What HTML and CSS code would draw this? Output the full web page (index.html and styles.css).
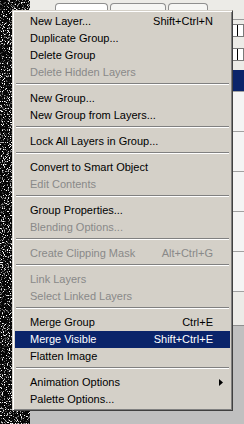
FILE: index.html
```html
<!DOCTYPE html>
<html lang="en">
<head>
    <meta charset="UTF-8">
    <title>Layers palette menu</title>
    <link rel="stylesheet" href="styles.css">
</head>
<body>
    <div class="screen">
        <div class="photo">
            <svg width="30" height="424" viewBox="0 0 30 424">
                <filter id="grain">
                    <feTurbulence type="fractalNoise" baseFrequency="0.85" numOctaves="2" seed="7"/>
                    <feColorMatrix type="matrix" values="0 0 0 0 1  0 0 0 0 1  0 0 0 0 1  7 0 0 0 -3.9"/>
                </filter>
                <rect width="30" height="424" fill="#060606"/>
                <rect width="30" height="424" filter="url(#grain)"/>
            </svg>
        </div>

        <div class="workspace">
            <div class="palette">
                <div class="tabs">
                    <span class="tab active"></span>
                    <span class="tab"></span>
                    <span class="tab"></span>
                </div>
                <div class="palette-body">
                    <div class="opt-row"><span class="field"><span class="field-btn"></span></span></div>
                    <div class="opt-row"><span class="field"><span class="field-btn"></span></span></div>
                    <div class="layer-list">
                        <div class="layer selected"></div>
                        <div class="layer"></div>
                        <div class="layer"></div>
                        <div class="layer"></div>
                        <div class="layer"></div>
                        <div class="layer"></div>
                    </div>
                </div>
            </div>
        </div>

        <ul class="menu">
            <li class="item"><span>New Layer...</span><span class="key">Shift+Ctrl+N</span></li>
            <li class="item"><span>Duplicate Group...</span></li>
            <li class="item"><span>Delete Group</span></li>
            <li class="item off"><span>Delete Hidden Layers</span></li>
            <li class="sep"></li>
            <li class="item"><span>New Group...</span></li>
            <li class="item"><span>New Group from Layers...</span></li>
            <li class="sep"></li>
            <li class="item"><span>Lock All Layers in Group...</span></li>
            <li class="sep"></li>
            <li class="item"><span>Convert to Smart Object</span></li>
            <li class="item off"><span>Edit Contents</span></li>
            <li class="sep"></li>
            <li class="item"><span>Group Properties...</span></li>
            <li class="item off"><span>Blending Options...</span></li>
            <li class="sep"></li>
            <li class="item off"><span>Create Clipping Mask</span><span class="key">Alt+Ctrl+G</span></li>
            <li class="sep"></li>
            <li class="item off"><span>Link Layers</span></li>
            <li class="item off"><span>Select Linked Layers</span></li>
            <li class="sep"></li>
            <li class="item"><span>Merge Group</span><span class="key">Ctrl+E</span></li>
            <li class="item hot"><span>Merge Visible</span><span class="key">Shift+Ctrl+E</span></li>
            <li class="item"><span>Flatten Image</span></li>
            <li class="sep"></li>
            <li class="item sub"><span>Animation Options</span>
                <svg class="arrow" width="4" height="7" viewBox="0 0 4 7"><polygon points="0,0 4,3.5 0,7" fill="#000"/></svg>
            </li>
            <li class="item"><span>Palette Options...</span></li>
        </ul>
    </div>
</body>
</html>
```

FILE: styles.css
```css
* {
    margin: 0;
    padding: 0;
    box-sizing: border-box;
}

body {
    font-family: "Liberation Sans", Arial, sans-serif;
    font-size: 11px;
    background: #c0c0c0;
}

.screen {
    position: relative;
    width: 244px;
    height: 424px;
    display: flex;
    overflow: hidden;
}

.photo {
    width: 30px;
    flex: none;
    background: #060606;
}

.photo svg {
    display: block;
}

.workspace {
    flex: 1;
    background: #c0c0c0;
}

/* layers palette behind the menu */
.palette {
    background: #ecebe7;
    height: 326px;
    border-bottom: 1px solid #8e8e8e;
}

.tabs {
    display: flex;
    gap: 2px;
    padding: 3px 0 0 25px;
    height: 20px;
    border-bottom: 1px solid #9a9a9a;
}

.tab {
    width: 53px;
    border: 1px solid #8f8f8f;
    border-bottom: none;
    border-radius: 4px 4px 0 0;
    background: #f6f6f4;
}

.tab:nth-child(2) {
    width: 56px;
}

.tab:nth-child(3) {
    width: 40px;
}

.tab.active {
    background: #fff;
}

.palette-body {
    padding-top: 2px;
}

.opt-row {
    display: flex;
    justify-content: flex-end;
    height: 24px;
    padding: 2px 0;
}

.field {
    display: flex;
    justify-content: flex-end;
    width: 20px;
    height: 13px;
    background: #fff;
    border: 1px solid #7a7a7a;
    border-left-color: #000;
}

.field-btn {
    width: 6px;
    border-left: 1px solid #000;
}

.layer-list {
    background: #fff;
}

.layer {
    height: 40px;
    border-bottom: 1px solid #a0a0a0;
    background: #f4f4f4;
}

.layer.selected {
    height: 22px;
    background: #0a246a;
}

/* context menu */
.menu {
    position: absolute;
    left: 12px;
    top: 10px;
    width: 221px;
    list-style: none;
    background: #d4d0c8;
    border: 1px solid;
    border-color: #d4d0c8 #404040 #404040 #d4d0c8;
    box-shadow: inset 1px 1px #fff, inset -1px -1px #808080;
    padding: 2px;
    font-family: "Liberation Sans", Arial, sans-serif;
    font-size: 11px;
    color: #000;
}

.item {
    display: flex;
    align-items: center;
    height: 17px;
    line-height: 17px;
    padding: 0 17px 0 15px;
    white-space: nowrap;
}

.item .key {
    margin-left: auto;
}

.item.off {
    color: #898989;
}

.item.hot {
    background: #0a246a;
    color: #fff;
}

.item.sub {
    padding-right: 7px;
}

.item .arrow {
    margin-left: auto;
    display: block;
}

.sep {
    margin: 2px 1px 5px;
    border-top: 1px solid #808080;
    border-bottom: 1px solid #fff;
}
```
